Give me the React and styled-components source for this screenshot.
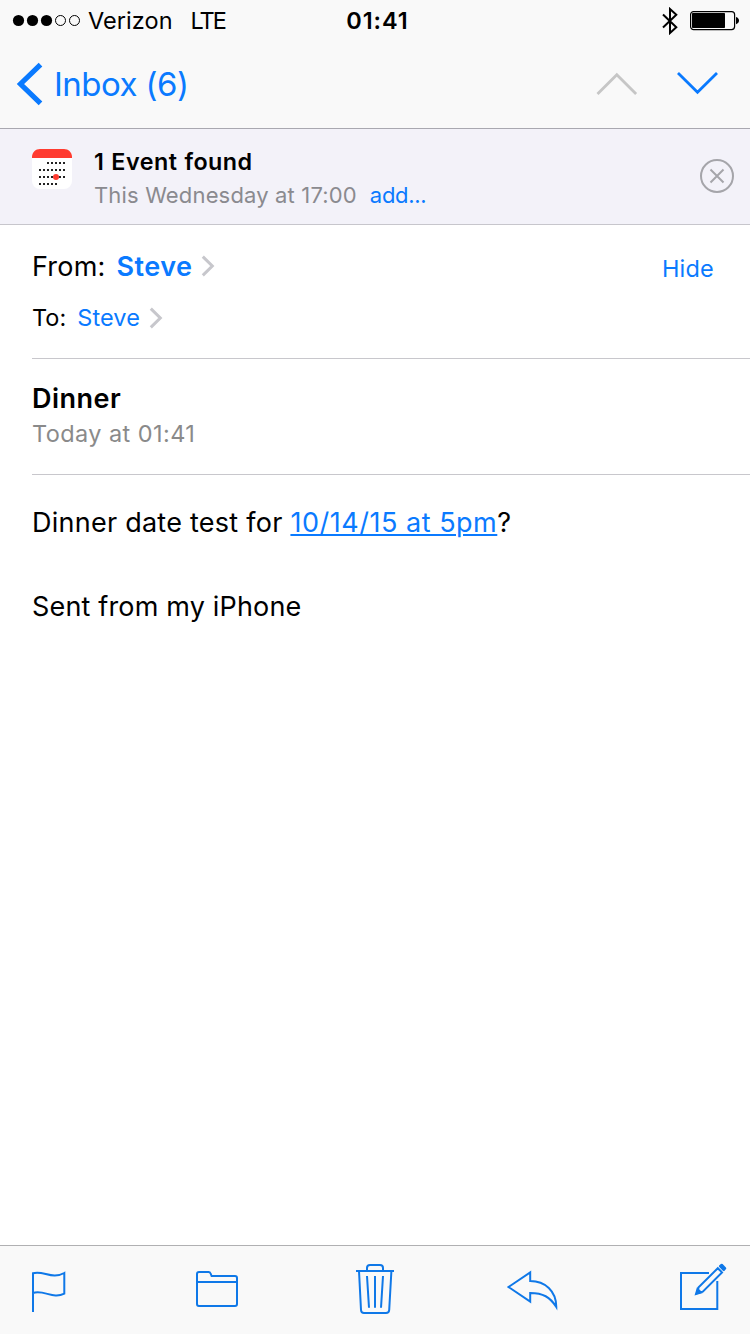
import React from 'react';
import styled, { createGlobalStyle } from 'styled-components';

const BLUE = '#0a7aff';
const ICON_BLUE = '#0f78e8';

const GlobalStyle = createGlobalStyle`
  * {
    box-sizing: border-box;
  }

  body {
    margin: 0;
    background: #fff;
    color: #000;
    font-family: Inter, "Liberation Sans", sans-serif;
  }
`;

const Screen = styled.div`
  display: flex;
  flex-direction: column;
  width: 750px;
  height: 1334px;
  overflow: hidden;
  white-space: nowrap;

  svg {
    display: block;
    flex: none;
  }
`;

const Header = styled.header`
  background: #f9f9f9;
  border-bottom: 1px solid #a9a8b0;
`;

const StatusBar = styled.div`
  display: grid;
  grid-template-columns: 1fr auto 1fr;
  align-items: center;
  height: 41px;
  padding: 0 11px 0 12px;
  line-height: 41px;
`;

const StatusGroup = styled.div`
  display: flex;
  align-items: center;
  justify-content: ${props => props.$end ? 'flex-end' : 'flex-start'};
  gap: ${props => props.$end ? '12px' : '0'};
`;

const StatusText = styled.span`
  font-size: 23.5px;
  font-weight: ${props => props.$bold ? 600 : 400};
  letter-spacing: ${props => props.$spacing || '0'};
  margin-left: ${props => props.$gap || '0'};
`;

const NavBar = styled.nav`
  display: flex;
  align-items: center;
  justify-content: space-between;
  height: 87px;
  padding: 0 31px 0 15px;

  svg {
    margin-bottom: 2px;
  }
`;

const BackLink = styled.a`
  display: flex;
  align-items: center;
  gap: 9px;
  color: ${BLUE};
  font-size: 33px;
  line-height: 87px;
  letter-spacing: -0.55px;
`;

const NavArrows = styled.div`
  display: flex;
  gap: 39px;
`;

const Banner = styled.section`
  display: flex;
  align-items: flex-start;
  height: 96px;
  padding: 16px 15px 0 32px;
  background: #f3f2f9;
  border-bottom: 1px solid #c7c6cc;
`;

const BannerIcon = styled.div`
  margin: 4px 22px 0 0;
`;

const BannerText = styled.div`
  flex: 1;
`;

const BannerTitle = styled.div`
  font-size: 23.3px;
  font-weight: 600;
  line-height: 33px;
  letter-spacing: 0.5px;
  word-spacing: 0.6px;
`;

const BannerDetail = styled.div`
  display: flex;
  gap: 13px;
  font-size: 22px;
  line-height: 34px;
  letter-spacing: 0.16px;
  color: #8a8a8f;
`;

const AddLink = styled.a`
  color: ${BLUE};
  letter-spacing: -0.3px;
`;

const CloseButton = styled.div`
  margin-top: 13px;
`;

const Section = styled.section`
  height: ${props => props.$height};
  margin-left: 32px;
  padding-top: ${props => props.$top};
  border-bottom: 1px solid #c8c7cc;
`;

const AddressRow = styled.div`
  display: flex;
  align-items: center;
  height: ${props => props.$small ? '53px' : '50px'};
  font-size: ${props => props.$small ? '23.5px' : '27px'};
  letter-spacing: ${props => props.$small ? '0' : '0.2px'};
`;

const Person = styled.a`
  margin: 0 ${props => props.$bold ? '8px' : '9px'} 0 11px;
  color: ${BLUE};
  font-weight: ${props => props.$bold ? 600 : 400};
  letter-spacing: ${props => props.$bold ? '0.5px' : '0.1px'};
`;

const HideLink = styled.a`
  margin: 4px 36px 0 auto;
  color: ${BLUE};
  font-size: 23.5px;
`;

const Subject = styled.h1`
  margin: 0;
  font-size: 27px;
  font-weight: 600;
  line-height: 37px;
  letter-spacing: 0.5px;
`;

const DateLine = styled.div`
  font-size: 23.5px;
  line-height: 34px;
  letter-spacing: 0.42px;
  color: #8a8a8a;
`;

const Body = styled.main`
  flex: 1;
  padding: 27px 32px;
  font-size: 27px;
  line-height: 42px;
`;

const Paragraph = styled.p`
  margin: 0 0 42px;
  letter-spacing: ${props => props.$spacing || '0'};
`;

const DateLink = styled.a`
  color: ${BLUE};
  letter-spacing: 0.52px;
  text-decoration: underline;
  text-decoration-thickness: 2px;
  text-underline-offset: 2px;
`;

const Toolbar = styled.footer`
  display: grid;
  grid-template-columns: repeat(5, 150px);
  height: 89px;
  background: #f9f9f9;
  border-top: 1px solid #b0b0b2;
`;

const ToolButton = styled.div`
  padding: 14px 0 0 ${props => props.$inset}px;
`;

const ToolIcon = ({ children }) => (
  <svg width="60" height="60" viewBox="0 0 60 60" fill="none" stroke={ICON_BLUE} strokeWidth="2">
    {children}
  </svg>
);

const SignalDots = () => (
  <svg width="70" height="13" viewBox="0 0 70 13">
    {[0, 1, 2, 3, 4].map(i => (
      <circle
        key={i}
        cx={6.5 + i * 14}
        cy="6.5"
        r={i < 3 ? 5.6 : 5}
        fill={i < 3 ? '#000' : 'none'}
        stroke={i < 3 ? 'none' : '#000'}
      />
    ))}
  </svg>
);

const Bluetooth = () => (
  <svg width="16" height="28" viewBox="0 0 16 28" fill="none" stroke="#000" strokeWidth="2">
    <path d="M1 7.5L14.3 20.3L8 26V2L14.3 7.7L1 20.5" />
  </svg>
);

const Battery = () => (
  <svg width="49" height="21" viewBox="0 0 49 21">
    <rect x="0.6" y="1.6" width="44" height="18" rx="3" fill="none" stroke="#000" strokeWidth="1.2" />
    <rect x="2" y="3" width="33" height="15" rx="0.8" />
    <path d="M46 7C50 8 50 13.2 46 14.2Z" />
  </svg>
);

const Disclosure = () => (
  <svg width="14" height="22" viewBox="0 0 14 22" fill="none" stroke="#c7c7cc" strokeWidth="3">
    <path d="M1.8 1.6L11.3 11L1.8 20.4" />
  </svg>
);

// [x offset, number of days] for each week of the month sheet
const weeks = [[16, 5], [8, 7], [8, 7], [8, 5]];

const CalendarIcon = () => (
  <svg width="40" height="40" viewBox="0 0 40 40">
    <rect width="40" height="40" rx="8" fill="#fff" />
    <path d="M0 9V8C0 3.5 3.5 0 8 0H32C36.5 0 40 3.5 40 8V9Z" fill="#ff3b30" />
    {weeks.map(([start, count], row) =>
      Array.from({ length: count }, (_, day) => (
        <rect key={`${row}-${day}`} x={start + day * 4 - 1} y={13 + row * 7} width="2" height="2" fill="#222" />
      ))
    )}
    <circle cx="24" cy="28" r="3" fill="#ff3b30" />
  </svg>
);

const App = () => (
  <Screen>
    <GlobalStyle />
    <Header>
      <StatusBar>
        <StatusGroup>
          <SignalDots />
          <StatusText $gap="6px" $spacing="0.05px">Verizon</StatusText>
          <StatusText $gap="18px" $spacing="-2px">LTE</StatusText>
        </StatusGroup>
        <StatusText $bold $gap="4px" $spacing="0.9px">01:41</StatusText>
        <StatusGroup $end>
          <Bluetooth />
          <Battery />
        </StatusGroup>
      </StatusBar>
      <NavBar>
        <BackLink>
          <svg width="30" height="44" viewBox="0 0 30 44" fill="none" stroke={BLUE} strokeWidth="5.2">
            <path d="M25.5 2.7L5.5 22L25.5 41.3" />
          </svg>
          Inbox (6)
        </BackLink>
        <NavArrows>
          <svg width="42" height="24" viewBox="0 0 42 24" fill="none" stroke="#c6c6c6" strokeWidth="2.8">
            <path d="M1.5 22L20.8 2.7L40.1 22" />
          </svg>
          <svg width="42" height="24" viewBox="0 0 42 24" fill="none" stroke={BLUE} strokeWidth="2.8">
            <path d="M1 1L20.5 20.3L40 1" />
          </svg>
        </NavArrows>
      </NavBar>
    </Header>

    <Banner>
      <BannerIcon>
        <CalendarIcon />
      </BannerIcon>
      <BannerText>
        <BannerTitle>1 Event found</BannerTitle>
        <BannerDetail>
          This Wednesday at 17:00
          <AddLink>add...</AddLink>
        </BannerDetail>
      </BannerText>
      <CloseButton>
        <svg width="36" height="36" viewBox="0 0 36 36" fill="none" stroke="#a5a5aa" strokeWidth="2">
          <circle cx="18" cy="18" r="16" />
          <path d="M11.5 11.5L24.5 24.5M24.5 11.5L11.5 24.5" />
        </svg>
      </CloseButton>
    </Banner>

    <Section $height="134px" $top="16px">
      <AddressRow>
        From:
        <Person $bold>Steve</Person>
        <Disclosure />
        <HideLink>Hide</HideLink>
      </AddressRow>
      <AddressRow $small>
        To:
        <Person>Steve</Person>
        <Disclosure />
      </AddressRow>
    </Section>

    <Section $height="116px" $top="21px">
      <Subject>Dinner</Subject>
      <DateLine>Today at 01:41</DateLine>
    </Section>

    <Body>
      <Paragraph $spacing="0.25px">
        Dinner date test for <DateLink>10/14/15 at 5pm</DateLink>?
      </Paragraph>
      <Paragraph $spacing="0.17px">Sent from my iPhone</Paragraph>
    </Body>

    <Toolbar>
      <ToolButton $inset={24}>
        <ToolIcon>
          <path d="M9 52V13.3C19 10 28 20 40.3 13V33.6C29 39.5 20 29.5 9 33" />
        </ToolIcon>
      </ToolButton>
      <ToolButton $inset={40}>
        <ToolIcon>
          <path d="M9 12H18.5Q20 12 20.6 13.5L21.6 16H45Q47 16 47 18V44Q47 46 45 46H9Q7 46 7 44V14Q7 12 9 12ZM7 22H47" />
        </ToolIcon>
      </ToolButton>
      <ToolButton $inset={45}>
        <ToolIcon>
          <path d="M22 11V8Q22 5 25 5H35Q38 5 38 8V11M11 11H49" />
          <path d="M14 11L16 50Q16.2 53 19 53H41Q44 53 44.2 50L46.4 11" />
          <path d="M22 16L24 47.7M30 16V47.7M38 16L36 47.7" />
        </ToolIcon>
      </ToolButton>
      <ToolButton $inset={52}>
        <ToolIcon>
          <path d="M6.5 27L28.2 12.3V21C43 21 54.3 31 54.3 47C48 37 41 33 28.2 33V41.7Z" />
        </ToolIcon>
      </ToolButton>
      <ToolButton $inset={72}>
        <ToolIcon>
          <path d="M37 13H9V49H45.3V21" />
          <path d="M24.8 33.3L26.6 27.4L45.8 8.2L50 12.4L30.8 31.6Z" />
          <path d="M24 34L25.5 29L29 32.5Z" fill={ICON_BLUE} />
          <path d="M48.2 6.2L49.7 5L53 8.3L51.8 9.8Z" fill={ICON_BLUE} strokeWidth="2.6" strokeLinejoin="round" />
        </ToolIcon>
      </ToolButton>
    </Toolbar>
  </Screen>
);

export default App;
